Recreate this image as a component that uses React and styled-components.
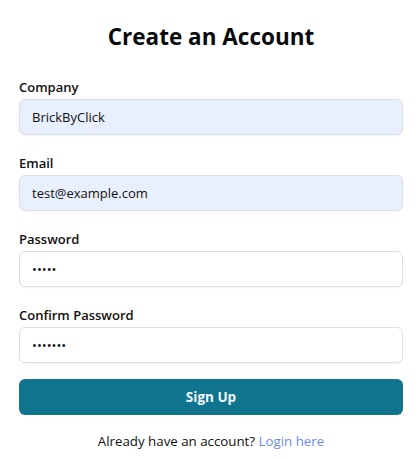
import React from "react";
import styled, { createGlobalStyle } from "styled-components";

const Global = createGlobalStyle`
  html, body { margin: 0; padding: 0; background: #ffffff; }
  body { font-family: "Open Sans", "Noto Sans", sans-serif; color: #111; }
  * { box-sizing: border-box; }
`;

const Page = styled.div`
  width: 419px;
  padding: 20px 16px 0 19px;
`;

const Title = styled.h1`
  margin: 0 0 21px;
  text-align: center;
  font-size: 22.5px;
  line-height: 34px;
  font-weight: 700;
  color: #0a0a0a;
`;

const Form = styled.form`
  display: flex;
  flex-direction: column;
  gap: 16px;
`;

const Field = styled.div`
  display: flex;
  flex-direction: column;
  padding-top: 3px;
`;

const Label = styled.label`
  font-size: 13px;
  line-height: 18px;
  font-weight: 600;
  color: #111;
  margin-bottom: 3px;
`;

const Input = styled.input`
  height: 36px;
  width: 100%;
  padding: 0 12px;
  border: 1px solid #dedede;
  border-radius: 6px;
  font-family: inherit;
  font-size: 13px;
  color: #111;
  background: ${(p) => (p.$filled ? "#e8f0fe" : "#ffffff")};
  box-shadow: 0 1px 2px rgba(0, 0, 0, 0.04);
  outline: none;
`;

const Button = styled.button`
  height: 36px;
  width: 100%;
  border: none;
  border-radius: 6px;
  background: #11748f;
  color: #f4f7ff;
  font-family: inherit;
  font-size: 13.5px;
  font-weight: 700;
  cursor: pointer;
`;

const Footer = styled.p`
  margin: 16px 0 0;
  text-align: center;
  font-size: 13.3px;
  line-height: 20px;
  color: #111;
`;

const Link = styled.a`
  color: #6a8af0;
  text-decoration: none;
`;

export default function App() {
  return (
    <Page>
      <Global />
      <Title>Create an Account</Title>
      <Form onSubmit={(e) => e.preventDefault()}>
        <Field>
          <Label>Company</Label>
          <Input $filled readOnly value="BrickByClick" />
        </Field>
        <Field>
          <Label>Email</Label>
          <Input $filled readOnly value="test@example.com" />
        </Field>
        <Field>
          <Label>Password</Label>
          <Input type="password" readOnly value="12345" />
        </Field>
        <Field>
          <Label>Confirm Password</Label>
          <Input type="password" readOnly value="1234567" />
        </Field>
        <Button type="submit">Sign Up</Button>
      </Form>
      <Footer>
        Already have an account? <Link href="#">Login here</Link>
      </Footer>
    </Page>
  );
}
